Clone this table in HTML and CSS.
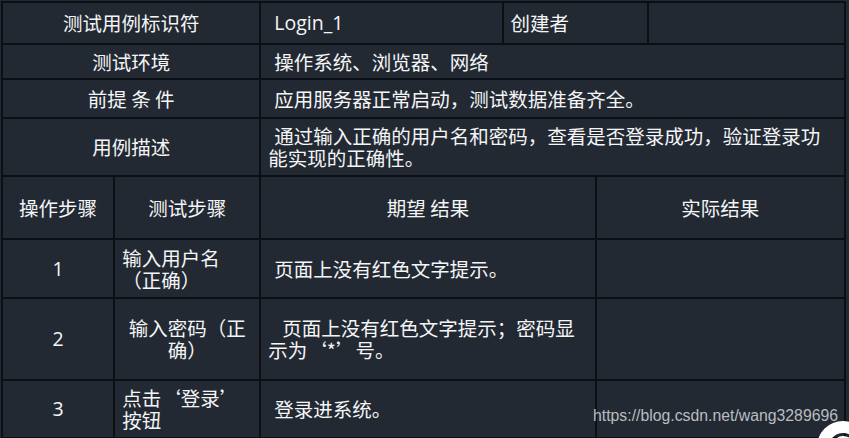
FILE: index.html
```html
<!DOCTYPE html>
<html lang="zh-CN">
<head>
<meta charset="utf-8">
<title>测试用例</title>
<link rel="stylesheet" href="styles.css">
</head>
<body>
<div class="page">
  <table class="case">
    <colgroup>
      <col class="c1"><col class="c2"><col class="c3"><col class="c4"><col class="c5"><col class="c6">
    </colgroup>
    <tr class="r1">
      <td colspan="2" class="center">测试用例标识符</td>
      <td class="indent latin">Login_1</td>
      <td colspan="2" class="tight">创建者</td>
      <td></td>
    </tr>
    <tr class="r2">
      <td colspan="2" class="center">测试环境</td>
      <td colspan="4" class="indent">操作系统、浏览器、网络</td>
    </tr>
    <tr class="r3">
      <td colspan="2" class="center">前提 条 件</td>
      <td colspan="4" class="indent">应用服务器正常启动，测试数据准备齐全。</td>
    </tr>
    <tr class="r4">
      <td colspan="2" class="center">用例描述</td>
      <td colspan="4" class="indent">通过输入正确的用户名和密码，查看是否登录成功，验证登录功能实现的正确性。</td>
    </tr>
    <tr class="r5">
      <td class="center">操作步骤</td>
      <td class="center">测试步骤</td>
      <td colspan="2" class="center">期望 结果</td>
      <td colspan="2" class="center">实际结果</td>
    </tr>
    <tr class="r6">
      <td class="center latin">1</td>
      <td>输入用户名（正确）</td>
      <td colspan="2" class="indent">页面上没有红色文字提示。</td>
      <td colspan="2"></td>
    </tr>
    <tr class="r7">
      <td class="center latin">2</td>
      <td class="center">输入密码（正确）</td>
      <td colspan="2" class="indent-wide">页面上没有红色文字提示；密码显示为‘*’号。</td>
      <td colspan="2"></td>
    </tr>
    <tr class="r8">
      <td class="center latin">3</td>
      <td class="anywhere">点击‘登录’按钮</td>
      <td colspan="2" class="indent">登录进系统。</td>
      <td colspan="2"></td>
    </tr>
  </table>
  <div class="watermark">https://blog.csdn.net/wang3289696</div>
  <svg class="logo" width="60" height="60" viewBox="0 0 60 60">
    <circle cx="31" cy="31" r="20" fill="none" stroke="#ffffff" stroke-width="12"/>
    <path d="M37 24 A9 9 0 1 0 37 38" fill="none" stroke="#ffffff" stroke-width="4"/>
  </svg>
</div>
</body>
</html>
```
FILE: styles.css
```css
html, body {
  margin: 0;
  padding: 0;
  background: #232932;
}
.page {
  position: relative;
  width: 849px;
  height: 438px;
  overflow: hidden;
  padding: 1px 0 0 1px;
  box-sizing: border-box;
}
.case {
  border-collapse: collapse;
  table-layout: fixed;
  width: 845px;
  font-family: "Noto Sans CJK SC", "Open Sans", sans-serif;
  font-size: 19.5px;
  line-height: 22px;
  color: #f4f5f7;
  text-spacing-trim: space-all;
}
.case td {
  border: 2px solid #0c0f13;
  padding: 0 7px;
  vertical-align: middle;
  text-align: left;
  overflow: hidden;
}
.c1 { width: 112px; }
.c2 { width: 146px; }
.c3 { width: 242px; }
.c4 { width: 93px; }
.c5 { width: 52px; }
.c6 { width: 197px; }
.r1 { height: 42px; }
.r2 { height: 35px; }
.r3 { height: 39px; }
.r4 { height: 58px; }
.r5 { height: 63px; }
.r6 { height: 59px; }
.r7 { height: 82px; }
.r8 { height: 58px; }
.case td.center { text-align: center; }
.case td.indent { text-indent: 6px; }
.case td.indent-wide { text-indent: 14px; }
.case td.tight { padding-left: 7px; }
.case td.anywhere { line-break: anywhere; }
.latin {
  font-family: "Open Sans", "Noto Sans CJK SC", sans-serif;
}
.watermark {
  position: absolute;
  left: 593px;
  top: 407px;
  font-family: "Liberation Sans", Arial, sans-serif;
  font-size: 15.8px;
  color: #b9bcc0;
  white-space: nowrap;
}
.logo {
  position: absolute;
  left: 812px;
  top: 416px;
}
```
